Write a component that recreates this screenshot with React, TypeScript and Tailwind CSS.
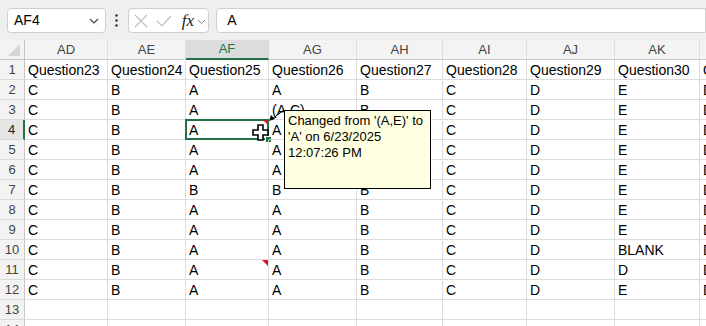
import React from "react";

const cols = [
  { l: "AD", w: 83 },
  { l: "AE", w: 78 },
  { l: "AF", w: 83 },
  { l: "AG", w: 88 },
  { l: "AH", w: 86 },
  { l: "AI", w: 84 },
  { l: "AJ", w: 88 },
  { l: "AK", w: 85 },
  { l: "AL", w: 60 },
];

const base = ["C", "B", "A", "A", "B", "C", "D", "E", "D"];
// AH4..AH6 sit fully under the comment box
const hidden = ["C", "B", "A", "A", "", "C", "D", "E", "D"];

const rows: string[][] = [
  ["Question23", "Question24", "Question25", "Question26", "Question27", "Question28", "Question29", "Question30", "Question31"],
  base,
  ["C", "B", "A", "(A,C)", "B", "C", "D", "E", "D"],
  hidden,
  hidden,
  hidden,
  ["C", "B", "B", "B", "B", "C", "D", "E", "D"],
  base,
  base,
  ["C", "B", "A", "A", "B", "C", "D", "BLANK", "D"],
  ["C", "B", "A", "A", "B", "C", "D", "D", "D"],
  base,
  ["", "", "", "", "", "", "", "", ""],
  ["", "", "", "", "", "", "", "", ""],
];

function RedMark({ size = 6 }: { size?: number }) {
  return (
    <svg width={size} height={size} className="absolute right-0 top-0">
      <polygon points={`0,0 ${size},0 ${size},${size}`} fill="#e81123" />
    </svg>
  );
}

function Toolbar() {
  return (
    <div className="h-[40px] bg-[#efefef] flex items-start pt-[8px] pl-[7px]">
      <div className="w-[101px] h-[25px] bg-white border border-[#cfcfcf] rounded-[4px] flex items-center justify-between pl-[6px] pr-[6px] text-[14px] text-black">
        <span>AF4</span>
        <svg width="10" height="6" viewBox="0 0 10 6">
          <path d="M1 1 L5 5 L9 1" fill="none" stroke="#444" strokeWidth="1.2" />
        </svg>
      </div>
      <div className="w-[22px] h-[25px] flex items-center justify-center">
        <svg width="3" height="13" viewBox="0 0 3 13">
          <circle cx="1.5" cy="1.5" r="1.3" fill="#333" />
          <circle cx="1.5" cy="6.5" r="1.3" fill="#333" />
          <circle cx="1.5" cy="11.5" r="1.3" fill="#333" />
        </svg>
      </div>
      <div className="w-[83px] h-[25px] bg-white border border-[#cfcfcf] rounded-[4px] flex items-center pl-[5px]">
        <svg width="14" height="14" viewBox="0 0 14 14">
          <path d="M1 1 L13 13 M13 1 L1 13" stroke="#bdbdbd" strokeWidth="1.2" />
        </svg>
        <svg width="16" height="14" viewBox="0 0 16 14" className="ml-[8px]">
          <path d="M1 7 L6 12 L15 2" fill="none" stroke="#bdbdbd" strokeWidth="1.2" />
        </svg>
        <span className="ml-[10px] font-['Liberation_Serif'] italic text-[17px] text-[#222] leading-none">fx</span>
        <svg width="9" height="6" viewBox="0 0 9 6" className="ml-[3px] mt-[2px]">
          <path d="M1 1 L4.5 4.5 L8 1" fill="none" stroke="#888" strokeWidth="1" />
        </svg>
      </div>
      <div className="ml-[7px] w-[500px] h-[25px] bg-white border border-[#cfcfcf] rounded-l-[4px] flex items-center pl-[10px] text-[14px] text-black">
        A
      </div>
    </div>
  );
}

function Sheet() {
  return (
    <div className="grid grid-cols-[25px_83px_78px_83px_88px_86px_84px_88px_85px_60px] text-[14px] text-black">
      <div className="h-[20px] bg-[#f3f3f3] border-b border-r border-[#c8c8c8] relative">
        <svg width="12" height="12" className="absolute right-[4px] bottom-[3px]">
          <polygon points="12,0 12,12 0,12" fill="#d6d6d6" />
        </svg>
      </div>
      {cols.map((c) => (
        <div
          key={c.l}
          className={
            c.l === "AF"
              ? "h-[20px] bg-[#dcdcdc] border-b-2 border-b-[#217346] border-r border-r-[#d8d8d8] flex items-center justify-center text-[#217346] text-[13px]"
              : "h-[20px] bg-[#f3f3f3] border-b border-b-[#c8c8c8] border-r border-r-[#dedede] flex items-center justify-center text-[#444] text-[13px]"
          }
        >
          {c.l}
        </div>
      ))}
      {rows.map((r, i) => (
        <React.Fragment key={i}>
          <div
            className={
              i === 3
                ? "h-[20px] bg-[#e6e6e6] border-b border-b-[#dadada] border-r-2 border-r-[#217346] flex items-center justify-center text-[#222] text-[13px]"
                : "h-[20px] bg-[#f3f3f3] border-b border-b-[#dadada] border-r border-r-[#c8c8c8] flex items-center justify-center text-[#444] text-[13px]"
            }
          >
            {i + 1}
          </div>
          {r.map((v, j) => (
            <div
              key={j}
              className="h-[20px] border-b border-r border-[#dcdcdc] pl-[3px] leading-[21px] whitespace-nowrap relative"
            >
              {v}
              {j === 2 && i === 3 && (
                <>
                  <div className="absolute -left-[1px] -top-[1px] -right-[1px] -bottom-[1px] border-2 border-[#217346]" />
                  <div className="absolute -right-[4px] -bottom-[4px] w-[7px] h-[7px] bg-[#217346] border border-white" />
                  <RedMark size={5} />
                </>
              )}
              {j === 2 && i === 10 && <RedMark size={6} />}
            </div>
          ))}
        </React.Fragment>
      ))}
    </div>
  );
}

export default function App() {
  return (
    <div className="w-[706px] h-[326px] overflow-hidden bg-white relative font-['Liberation_Sans',sans-serif]">
      <Toolbar />
      <Sheet />

      <svg width="20" height="16" className="absolute left-[268px] top-[109px]">
        <line x1="16" y1="1" x2="4" y2="10" stroke="#000" strokeWidth="1" />
        <polygon points="1,12 3,6 7,10" fill="#000" />
      </svg>

      <div className="absolute left-[284px] top-[110px] w-[147px] h-[79px] bg-[#ffffe1] border border-black pl-[3px] pt-[2px] text-[13px] leading-[16px] text-black">
        <div>Changed from '(A,E)' to</div>
        <div>'A' on 6/23/2025</div>
        <div>12:07:26 PM</div>
      </div>

      <svg width="18" height="18" viewBox="0 0 18 18" className="absolute left-[252px] top-[124px]">
        <path d="M6 1 H11 V6 H16 V11 H11 V16 H6 V11 H1 V6 H6 Z" fill="#fff" stroke="#000" strokeWidth="1.6" strokeLinejoin="miter" />
      </svg>
    </div>
  );
}
